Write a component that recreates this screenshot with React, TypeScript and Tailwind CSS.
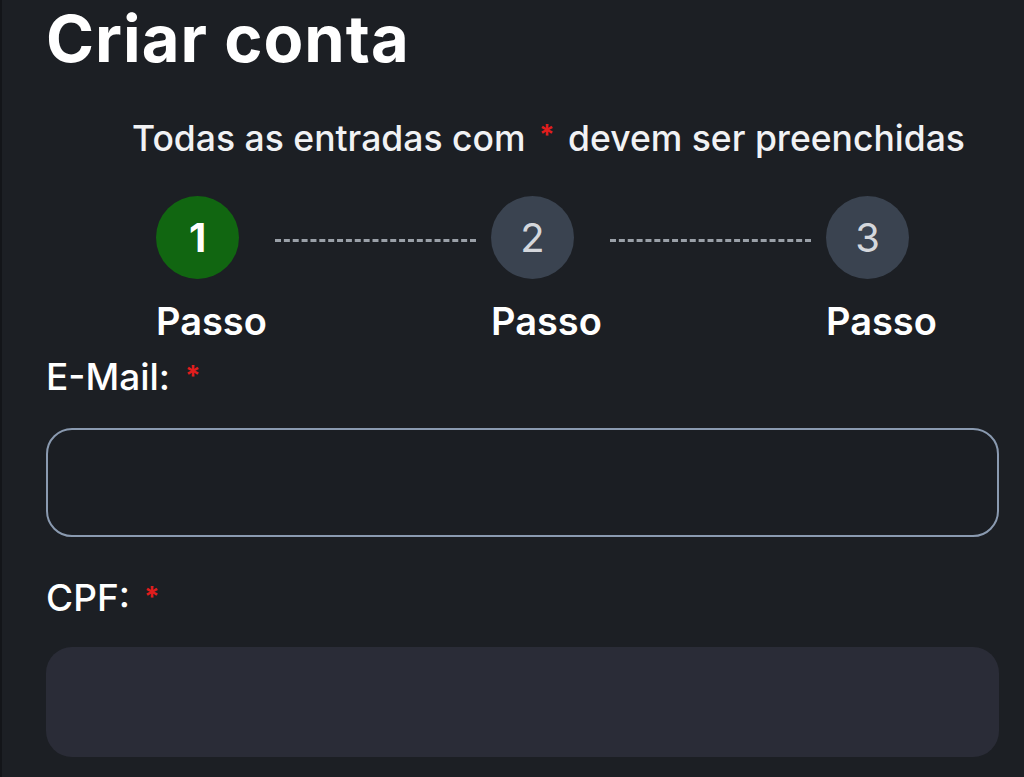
import React from 'react';

const steps = ['1', '2', '3'];

const Asterisk = ({ className = '' }: { className?: string }) => (
  <span className={`text-[#e11d1d] font-bold leading-none ${className}`}>*</span>
);

const StepCircle = ({ n, active }: { n: string; active: boolean }) => (
  <div className="flex flex-col w-[83px]">
    <div
      className={
        active
          ? 'w-[83px] h-[83px] rounded-full bg-[#116611] flex items-center justify-center text-white text-[40px] font-bold'
          : 'w-[83px] h-[83px] rounded-full bg-[#3a4350] flex items-center justify-center text-[#d4d7dc] text-[40px] font-normal'
      }
    >
      {n}
    </div>
    <span className="mt-[20px] text-[38px] leading-[44px] font-semibold text-white whitespace-nowrap">Passo</span>
  </div>
);

export default function App() {
  return (
    <div
      className="min-h-screen bg-[#1c1f24] border-l-2 border-[#131519] pl-[44px] pr-[25px] text-white"
      style={{ fontFamily: 'Inter, "Noto Sans", sans-serif' }}
    >
      <h1 className="pt-[7px] text-[65px] leading-[64px] font-bold tracking-[1px]">Criar conta</h1>

      <p className="mt-[46px] pl-[86px] text-[35.5px] leading-[44px] font-medium text-[#f1f2f4] whitespace-nowrap">
        Todas as entradas com <Asterisk className="text-[28px] relative top-[-6px] mx-[4px]" /> devem ser preenchidas
      </p>

      <div className="mt-[35px] pl-[110px] flex items-start">
        {steps.map((n, i) => (
          <React.Fragment key={n}>
            <StepCircle n={n} active={i === 0} />
            {i < steps.length - 1 && (
              <div className="mt-[43px] ml-[36px] mr-[15px] w-[201px] border-t-[3px] border-dashed border-[#9aa0a8]" />
            )}
          </React.Fragment>
        ))}
      </div>

      <label className="mt-[12px] flex items-start text-[37px] leading-[44px] font-medium">
        E-Mail:
        <Asterisk className="ml-[15px] mt-[7px] text-[28px]" />
      </label>
      <div className="mt-[29px] h-[109px] rounded-[26px] border-2 border-[#8a9ab0] bg-[#1b1e23]" />

      <label className="mt-[39px] flex items-start text-[37px] leading-[44px] font-medium">
        CPF:
        <Asterisk className="ml-[14px] mt-[7px] text-[28px]" />
      </label>
      <div className="mt-[27px] h-[110px] rounded-[26px] bg-[#2a2c37]" />
    </div>
  );
}
